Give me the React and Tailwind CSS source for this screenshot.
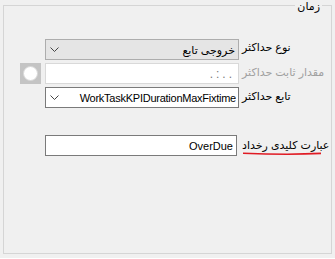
import { useState } from 'react';

const Chevron = () => (
  <svg width="9" height="5" viewBox="0 0 9 5" className="shrink-0">
    <path d="M0.5 0.5 L4.5 4.5 L8.5 0.5" fill="none" stroke="#444" strokeWidth="1" />
  </svg>
);

const FieldRow = ({ label, labelClass = 'text-black', underline, labelOffset = 'mt-[3px]', children, leading }) => (
  <div className="flex items-start">
    <div className="w-[41px] flex justify-end pr-[4px] shrink-0">{leading}</div>
    {children}
    <div className={`ml-[3px] relative ${labelOffset}`}>
      <span className={`block whitespace-nowrap text-[11px] leading-[14px] ${labelClass}`} dir="rtl">
        {label}
      </span>
      {underline && (
        <svg width="80" height="4" viewBox="0 0 80 4" className="absolute left-0 top-[14px]">
          <path d="M1 1.2 C 25 2.2, 55 2.6, 79 1.4" fill="none" stroke="#e01b24" strokeWidth="1.6" />
        </svg>
      )}
    </div>
  </div>
);

export default function App() {
  const [keyword, setKeyword] = useState('OverDue');

  return (
    <div className="w-[335px] h-[259px] bg-[#f0f0f0] px-[3px] pt-0 font-['Liberation_Sans','DejaVu_Sans',sans-serif]">
      <fieldset className="border border-[#d5d5d5] h-[255px] w-[329px] -mt-[1px] m-0 p-0">
        <legend className="ml-auto mr-[9px] px-[2px] pt-[2px] text-[11px] leading-[10px] text-black" dir="rtl">زمان</legend>

        <div className="flex flex-col pt-[28px]">
          <FieldRow label="نوع حداکثر" labelOffset="mt-[1px]">
            <div className="w-[194px] h-[21px] border border-[#adadad] bg-[#e5e5e5] flex items-center pl-[4px] pr-[3px] shrink-0">
              <Chevron />
              <span className="flex-1 text-right text-[11px] leading-[14px] text-black" dir="rtl">خروجی تابع</span>
            </div>
          </FieldRow>

          <div className="h-[3px]" />

          <FieldRow
            label="مقدار ثابت حداکثر"
            labelClass="text-[#a0a0a0]"
            labelOffset="mt-[2px]"
            leading={
              <div className="w-[21px] h-[21px] bg-[#c4c4c4] flex items-center justify-center">
                <div className="w-[15px] h-[15px] rounded-full bg-white border border-[#d8d8d8]" />
              </div>
            }
          >
            <div className="w-[194px] h-[21px] border border-[#d9d9d9] bg-white flex items-center justify-end pr-[3px] shrink-0">
              <span className="text-[12px] leading-[14px] text-[#7a7a7a] tracking-[3px]">.:..</span>
            </div>
          </FieldRow>

          <div className="h-[3px]" />

          <FieldRow label="تابع حداکثر" labelOffset="mt-[2px]">
            <div className="w-[194px] h-[21px] border border-[#7a7a7a] bg-white flex items-center pl-[4px] pr-[2px] shrink-0">
              <Chevron />
              <span className="flex-1 text-right text-[11px] tracking-[-0.25px] leading-[14px] text-black whitespace-nowrap overflow-hidden">
                WorkTaskKPIDurationMaxFixtime
              </span>
            </div>
          </FieldRow>

          <div className="h-[27px]" />

          <FieldRow label="عبارت کلیدی رخداد" underline labelOffset="mt-[3px]">
            <input
              value={keyword}
              onChange={(e) => setKeyword(e.target.value)}
              className="w-[192px] h-[21px] border border-[#7a7a7a] bg-white text-right text-[11px] leading-[14px] text-black pr-[3px] outline-none shrink-0"
            />
            <div className="w-[2px]" />
          </FieldRow>
        </div>
      </fieldset>
    </div>
  );
}
